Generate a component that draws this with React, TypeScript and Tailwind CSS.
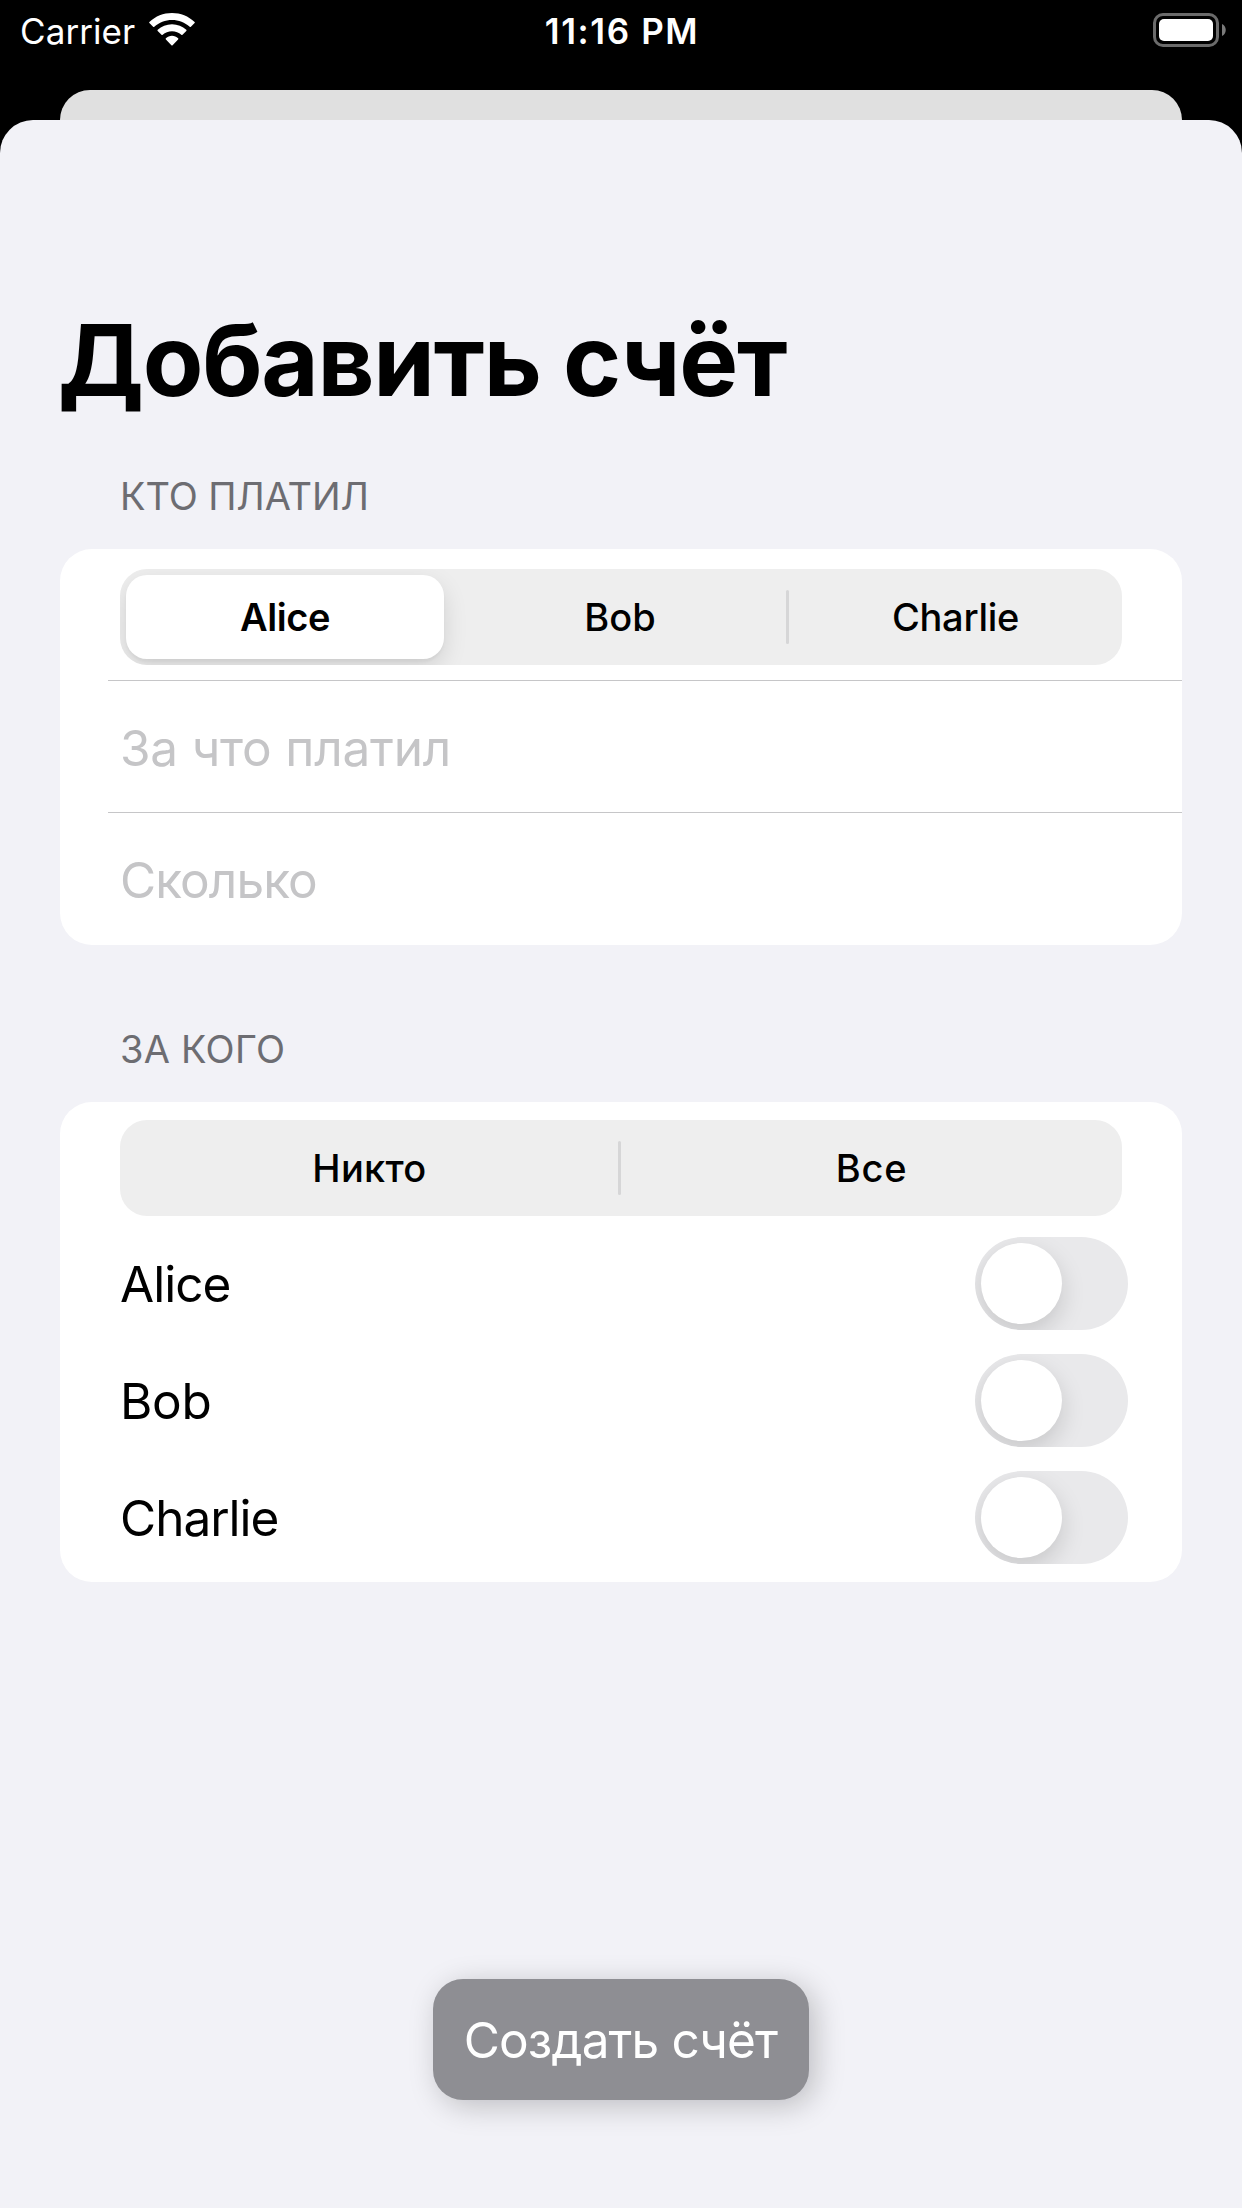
import type { ReactNode } from "react";

function StatusBar() {
  return (
    <header className="grid h-[60px] grid-cols-3 items-start text-white">
      <div className="flex pl-5">
        <span className="mt-[9px] text-[35px] leading-[44px] tracking-[0.08px]">Carrier</span>
        <svg className="mt-3 ml-[13px] h-[36px] w-[48px]" viewBox="0 0 48 36" fill="white">
          <path d="M24 1 C32.6 1 40.5 4.3 46.6 9.9 Q47.2 10.5 46.6 11.1 L42.9 14.7 Q42.3 15.3 41.7 14.8 C36.9 10.5 30.7 8 24 8 C17.3 8 11.1 10.5 6.3 14.8 Q5.7 15.3 5.1 14.7 L1.4 11.1 Q0.8 10.5 1.4 9.9 C7.5 4.3 15.4 1 24 1 Z" />
          <path d="M24 12.2 C29.5 12.2 34.5 14.3 38.3 17.8 Q38.9 18.4 38.3 19 L34.5 22.8 Q33.9 23.3 33.3 22.8 C30.8 20.6 27.6 19.3 24 19.3 C20.4 19.3 17.2 20.6 14.7 22.8 Q14.1 23.3 13.5 22.8 L9.7 19 Q9.1 18.4 9.7 17.8 C13.5 14.3 18.5 12.2 24 12.2 Z" />
          <path d="M24 23.8 C26.3 23.8 28.5 24.7 30.1 26.2 Q30.7 26.8 30.1 27.4 L24.6 33.3 Q24 33.9 23.4 33.3 L17.9 27.4 Q17.3 26.8 17.9 26.2 C19.5 24.7 21.7 23.8 24 23.8 Z" />
        </svg>
      </div>
      <span className="mt-[9px] pl-0.5 text-center text-[35px] leading-[44px] font-semibold tracking-[1.6px]">
        11:16 PM
      </span>
      <div className="mt-[13px] mr-4 flex items-center justify-end gap-[3px]">
        <div className="h-[34px] w-[66px] rounded-[10px] border-3 border-[#6b6b6b] p-[3px]">
          <div className="h-full rounded-[5px] bg-white" />
        </div>
        <svg className="h-3 w-1" viewBox="0 0 4 12" fill="#7a7a7a">
          <path d="M0 0 C5 2 5 10 0 12 Z" />
        </svg>
      </div>
    </header>
  );
}

function Divider() {
  return <div className="ml-12 h-px bg-[#c6c6c8]" />;
}

function SegmentDivider() {
  return <div className="h-[54px] w-[3px] rounded-full bg-[#d6d6d7]" />;
}

function Segments({ children }: { children: ReactNode }) {
  return (
    <div className="mx-[60px] flex h-24 items-center overflow-hidden rounded-[27px] bg-[#eeeeee] text-center text-[38px] leading-[46px] font-medium text-black">
      {children}
    </div>
  );
}

function Field({ children, spacing }: { children: string; spacing: string }) {
  return (
    <div className="flex h-[131px] items-center pt-[3px] pl-[60px] text-[49.5px] leading-[60px] text-[#c5c5c7]">
      <span className={spacing}>{children}</span>
    </div>
  );
}

function ToggleRow({ name, spacing }: { name: string; spacing: string }) {
  return (
    <div className="flex h-[117px] items-center justify-between pr-[54px] pl-[60px]">
      <span className={`text-[49.5px] leading-[60px] text-black ${spacing}`}>{name}</span>
      <button
        type="button"
        role="switch"
        aria-checked="false"
        aria-label={name}
        className="h-[93px] w-[153px] overflow-hidden rounded-full bg-[#e9e9eb] p-1.5"
      >
        <span className="block h-[81px] w-[81px] rounded-full bg-white shadow-[0_9px_24px_rgba(0,0,0,0.15)]" />
      </button>
    </div>
  );
}

export default function App() {
  return (
    <div className="flex h-[2208px] w-[1242px] flex-col overflow-hidden bg-black font-['Inter',sans-serif]">
      <StatusBar />
      <div className="mx-[60px] mt-[30px] h-[30px] shrink-0 rounded-t-[30px] bg-[#e0e0e0]" />
      <main className="flex flex-1 flex-col rounded-t-[33px] bg-[#f2f2f7] px-[60px]">
        <h1 className="mt-[180px] -ml-0.5 text-[99px] leading-[120px] font-bold tracking-[-1.26px] text-black">
          Добавить счёт
        </h1>

        <h2 className="mt-[53px] ml-[60px] text-[38px] leading-[46px] tracking-[-0.11px] text-[#6d6d72]">
          КТО ПЛАТИЛ
        </h2>
        <section className="mt-[30px] h-[396px] rounded-[32px] bg-white pt-5">
          <Segments>
            <div className="ml-1.5 flex h-[84px] w-[318px] items-center justify-center rounded-[21px] bg-white font-semibold tracking-[-0.47px] shadow-[0_9px_24px_rgba(0,0,0,0.12),0_3px_3px_rgba(0,0,0,0.04)]">
              Alice
            </div>
            <div className="w-[342px] pr-[3px] pl-[13px]">Bob</div>
            <SegmentDivider />
            <div className="flex-1 tracking-[-0.29px]">Charlie</div>
          </Segments>
          <div className="h-[15px]" />
          <Divider />
          <Field spacing="tracking-[-0.2px]">За что платил</Field>
          <Divider />
          <Field spacing="tracking-[-0.9px]">Сколько</Field>
        </section>

        <h2 className="mt-[81px] ml-[60px] text-[38px] leading-[46px] tracking-[0.24px] text-[#6d6d72]">
          ЗА КОГО
        </h2>
        <section className="mt-[30px] h-[480px] rounded-[32px] bg-white pt-[18px]">
          <Segments>
            <div className="w-[498px] pl-px tracking-[0.3px]">Никто</div>
            <SegmentDivider />
            <div className="flex-1 tracking-[0.7px]">Все</div>
          </Segments>
          <div className="h-[9px]" />
          <ToggleRow name="Alice" spacing="tracking-[-1px]" />
          <ToggleRow name="Bob" spacing="tracking-[-0.3px]" />
          <ToggleRow name="Charlie" spacing="tracking-[-1.02px]" />
        </section>

        <button
          type="button"
          className="mt-[397px] h-[121px] w-[376px] self-center rounded-[30px] bg-[#8e8e93] pr-px text-[49.5px] leading-[60px] tracking-[-0.85px] whitespace-nowrap text-white shadow-[6px_6px_30px_rgba(0,0,0,0.22)]"
        >
          Создать счёт
        </button>
      </main>
    </div>
  );
}
